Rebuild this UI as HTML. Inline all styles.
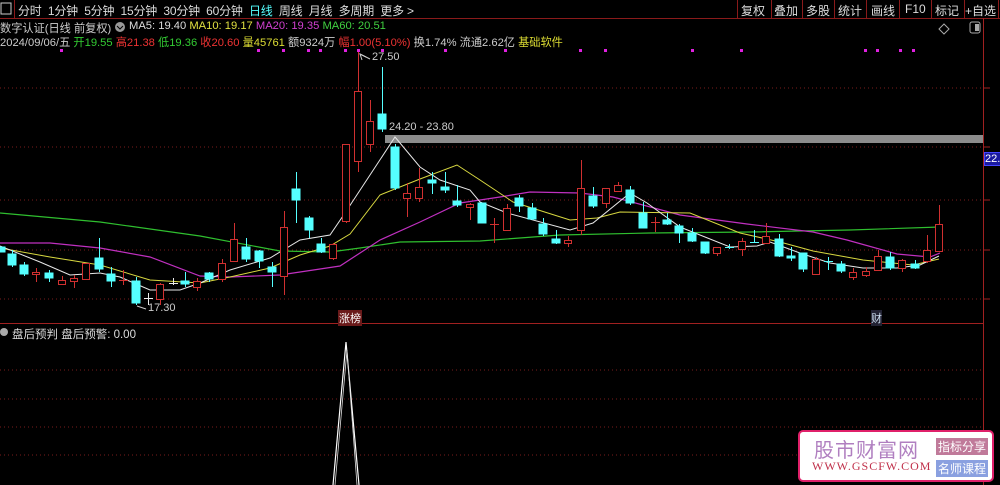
<!DOCTYPE html>
<html><head><meta charset="utf-8"><style>
body{margin:0;background:#000;width:1000px;height:485px;overflow:hidden;font-family:"Liberation Sans","Noto Sans CJK SC",sans-serif;}
.t{position:absolute;white-space:nowrap;font-size:12px;}
</style></head><body>
<div style="position:relative;width:1000px;height:485px;">
<svg width="1000" height="485" style="position:absolute;left:0;top:0">
<line x1="0" y1="18.5" x2="1000" y2="18.5" stroke="#8a1a1a"/>
<rect x="1" y="3" width="10" height="11" fill="none" stroke="#ccc"/>
<line x1="14.5" y1="0" x2="14.5" y2="18" stroke="#8a1a1a"/>
<g stroke="#8a1a1a"><line x1="737.5" y1="0" x2="737.5" y2="18"/><line x1="771.5" y1="0" x2="771.5" y2="18"/><line x1="802.5" y1="0" x2="802.5" y2="18"/><line x1="834.5" y1="0" x2="834.5" y2="18"/><line x1="866.5" y1="0" x2="866.5" y2="18"/><line x1="899.5" y1="0" x2="899.5" y2="18"/><line x1="931.5" y1="0" x2="931.5" y2="18"/><line x1="964.5" y1="0" x2="964.5" y2="18"/><line x1="998.5" y1="0" x2="998.5" y2="18"/></g>
<line x1="983.5" y1="18" x2="983.5" y2="485" stroke="#a02020"/>
<line x1="0" y1="323.5" x2="983" y2="323.5" stroke="#a02020"/>
<g stroke="#7a1c1c" stroke-dasharray="1,3">
<line x1="0" y1="88" x2="983" y2="88"/><line x1="0" y1="147" x2="983" y2="147"/><line x1="0" y1="200" x2="983" y2="200"/><line x1="0" y1="250" x2="983" y2="250"/><line x1="0" y1="299" x2="983" y2="299"/>
<line x1="0" y1="370" x2="983" y2="370"/><line x1="0" y1="399" x2="983" y2="399"/><line x1="0" y1="427" x2="983" y2="427"/><line x1="0" y1="455" x2="983" y2="455"/>
</g>
<g stroke="#a02020"><line x1="984" y1="88" x2="990" y2="88"/><line x1="984" y1="147" x2="990" y2="147"/><line x1="984" y1="200" x2="990" y2="200"/><line x1="984" y1="250" x2="990" y2="250"/><line x1="984" y1="299" x2="990" y2="299"/></g>
<g fill="#e020e0"><rect x="60" y="49" width="3" height="3"/><rect x="257" y="49" width="3" height="3"/><rect x="282" y="49" width="3" height="3"/><rect x="307" y="49" width="3" height="3"/><rect x="319" y="49" width="3" height="3"/><rect x="344" y="49" width="3" height="3"/><rect x="357" y="49" width="3" height="3"/><rect x="381" y="49" width="3" height="3"/><rect x="444" y="49" width="3" height="3"/><rect x="504" y="49" width="3" height="3"/><rect x="579" y="49" width="3" height="3"/><rect x="604" y="49" width="3" height="3"/><rect x="691" y="49" width="3" height="3"/><rect x="740" y="49" width="3" height="3"/><rect x="864" y="49" width="3" height="3"/><rect x="876" y="49" width="3" height="3"/><rect x="899" y="49" width="3" height="3"/><rect x="912" y="49" width="3" height="3"/></g>
<rect x="385" y="135" width="598" height="8" fill="#8c8c8c"/>
<polyline fill="none" stroke="#2fbf2f" stroke-width="1.2" points="0,213 100,222 200,236 280,251 330,252 360,248 400,242 480,241 560,235 650,233 750,232 850,230 940,227"/>
<polyline fill="none" stroke="#c030c0" stroke-width="1.2" points="0,243 50,243 100,248 150,257 200,276 230,277 280,275 340,266 380,240 420,222 460,203 480,200 500,197 530,192 580,193 613,197 680,215 747,224 813,232 847,240 897,254 930,257 940,253"/>
<polyline fill="none" stroke="#d8d840" stroke-width="1" points="0,248 50,257 100,265 150,280 200,283 230,277 270,268 300,255 330,246 350,234 380,195 420,179 457,165 480,180 513,202 570,220 597,218 620,212 690,213 740,233 780,242 813,251 863,260 913,265 939,259"/>
<polyline fill="none" stroke="#e8e8e8" stroke-width="1" points="0,246 40,262 70,275 100,273 120,277 150,290 180,290 200,283 230,270 270,258 300,240 330,235 345,213 370,175 395,137 420,167 440,180 470,190 480,202 507,213 570,230 593,223 630,193 647,203 680,227 730,247 757,246 770,242 800,253 830,263 863,268 897,268 920,265 939,256"/>
<g stroke="#5ff" fill="#5ff">
<rect x="-3" y="247" width="8" height="5"/>
<line x1="12.5" y1="250" x2="12.5" y2="267"/><rect x="8" y="254" width="8" height="11"/>
<line x1="24.5" y1="262" x2="24.5" y2="276"/><rect x="20" y="265" width="8" height="9"/>
<line x1="49.5" y1="270" x2="49.5" y2="282"/><rect x="45" y="273" width="8" height="5"/>
<line x1="99.5" y1="238" x2="99.5" y2="272"/><rect x="95" y="258" width="8" height="11"/>
<line x1="111.5" y1="267" x2="111.5" y2="287"/><rect x="107" y="274" width="8" height="7"/>
<line x1="136.5" y1="277" x2="136.5" y2="305"/><rect x="132" y="281" width="8" height="22"/>
<line x1="185.5" y1="272" x2="185.5" y2="287"/><rect x="181" y="281" width="8" height="3"/>
<line x1="209.5" y1="272" x2="209.5" y2="282"/><rect x="205" y="273" width="8" height="6"/>
<line x1="246.5" y1="238" x2="246.5" y2="262"/><rect x="242" y="247" width="8" height="12"/>
<line x1="259.5" y1="250" x2="259.5" y2="268"/><rect x="255" y="251" width="8" height="10"/>
<line x1="272.5" y1="262" x2="272.5" y2="287"/><rect x="268" y="267" width="8" height="5"/>
<line x1="296.5" y1="172" x2="296.5" y2="223"/><rect x="292" y="189" width="8" height="11"/>
<line x1="309.5" y1="216" x2="309.5" y2="238"/><rect x="305" y="218" width="8" height="12"/>
<line x1="321.5" y1="238" x2="321.5" y2="253"/><rect x="317" y="244" width="8" height="8"/>
<line x1="382.5" y1="67" x2="382.5" y2="132"/><rect x="378" y="114" width="8" height="15"/>
<line x1="395.5" y1="144" x2="395.5" y2="190"/><rect x="391" y="147" width="8" height="41"/>
<line x1="432.5" y1="172" x2="432.5" y2="194"/><rect x="428" y="180" width="8" height="3"/>
<line x1="445.5" y1="172" x2="445.5" y2="193"/><rect x="441" y="187" width="8" height="3"/>
<line x1="457.5" y1="185" x2="457.5" y2="207"/><rect x="453" y="201" width="8" height="4"/>
<rect x="478" y="203" width="8" height="20"/>
<line x1="519.5" y1="195" x2="519.5" y2="212"/><rect x="515" y="198" width="8" height="8"/>
<line x1="532.5" y1="203" x2="532.5" y2="220"/><rect x="528" y="208" width="8" height="11"/>
<line x1="543.5" y1="218" x2="543.5" y2="236"/><rect x="539" y="224" width="8" height="10"/>
<line x1="556.5" y1="230" x2="556.5" y2="244"/><rect x="552" y="239" width="8" height="4"/>
<line x1="593.5" y1="187" x2="593.5" y2="208"/><rect x="589" y="196" width="8" height="10"/>
<line x1="630.5" y1="186" x2="630.5" y2="205"/><rect x="626" y="190" width="8" height="13"/>
<line x1="643.5" y1="202" x2="643.5" y2="228"/><rect x="639" y="213" width="8" height="15"/>
<line x1="667.5" y1="213" x2="667.5" y2="225"/><rect x="663" y="220" width="8" height="4"/>
<line x1="679.5" y1="224" x2="679.5" y2="243"/><rect x="675" y="226" width="8" height="7"/>
<line x1="692.5" y1="228" x2="692.5" y2="242"/><rect x="688" y="233" width="8" height="8"/>
<line x1="705.5" y1="242" x2="705.5" y2="254"/><rect x="701" y="242" width="8" height="11"/>
<line x1="729.5" y1="244" x2="729.5" y2="249"/><line x1="725" y1="247.5" x2="734" y2="247.5"/>
<line x1="754.5" y1="230" x2="754.5" y2="243"/><line x1="750" y1="242.5" x2="759" y2="242.5"/>
<line x1="779.5" y1="234" x2="779.5" y2="257"/><rect x="775" y="239" width="8" height="17"/>
<line x1="791.5" y1="247" x2="791.5" y2="261"/><rect x="787" y="256" width="8" height="2"/>
<line x1="803.5" y1="253" x2="803.5" y2="272"/><rect x="799" y="253" width="8" height="16"/>
<line x1="828.5" y1="257" x2="828.5" y2="270"/><line x1="824" y1="261.5" x2="833" y2="261.5"/>
<line x1="841.5" y1="261" x2="841.5" y2="273"/><rect x="837" y="264" width="8" height="7"/>
<line x1="890.5" y1="252" x2="890.5" y2="270"/><rect x="886" y="257" width="8" height="11"/>
<line x1="915.5" y1="260" x2="915.5" y2="269"/><rect x="911" y="264" width="8" height="4"/>
</g>
<g stroke="#d03030" fill="#000">
<line x1="36.5" y1="268" x2="36.5" y2="282"/><rect x="32.5" y="272.5" width="7" height="2"/>
<line x1="62.5" y1="276" x2="62.5" y2="284"/><rect x="58.5" y="280.5" width="7" height="4"/>
<line x1="74.5" y1="275" x2="74.5" y2="288"/><rect x="70.5" y="278.5" width="7" height="3"/>
<rect x="82.5" y="263.5" width="7" height="16"/>
<line x1="123.5" y1="270" x2="123.5" y2="285"/><line x1="119" y1="280.5" x2="128" y2="280.5"/>
<line x1="160.5" y1="283" x2="160.5" y2="305"/><rect x="156.5" y="284.5" width="7" height="15"/>
<line x1="197.5" y1="278" x2="197.5" y2="291"/><rect x="193.5" y="281.5" width="7" height="6"/>
<line x1="222.5" y1="259" x2="222.5" y2="282"/><rect x="218.5" y="263.5" width="7" height="16"/>
<line x1="234.5" y1="223" x2="234.5" y2="262"/><rect x="230.5" y="239.5" width="7" height="22"/>
<line x1="284.5" y1="211" x2="284.5" y2="295"/><rect x="280.5" y="227.5" width="7" height="49"/>
<line x1="333.5" y1="243" x2="333.5" y2="260"/><rect x="329.5" y="244.5" width="7" height="14"/>
<line x1="346.5" y1="144" x2="346.5" y2="223"/><rect x="342.5" y="144.5" width="7" height="77"/>
<line x1="358.5" y1="52" x2="358.5" y2="172"/><rect x="354.5" y="91.5" width="7" height="70"/>
<line x1="370.5" y1="100" x2="370.5" y2="152"/><rect x="366.5" y="121.5" width="7" height="23"/>
<line x1="407.5" y1="183" x2="407.5" y2="217"/><rect x="403.5" y="193.5" width="7" height="5"/>
<line x1="419.5" y1="168" x2="419.5" y2="202"/><rect x="415.5" y="187.5" width="7" height="11"/>
<line x1="470.5" y1="203" x2="470.5" y2="220"/><rect x="466.5" y="204.5" width="7" height="3"/>
<line x1="494.5" y1="218" x2="494.5" y2="243"/><line x1="490" y1="224.5" x2="499" y2="224.5"/>
<line x1="507.5" y1="204" x2="507.5" y2="230"/><rect x="503.5" y="208.5" width="7" height="22"/>
<line x1="568.5" y1="236" x2="568.5" y2="247"/><rect x="564.5" y="240.5" width="7" height="3"/>
<line x1="581.5" y1="160" x2="581.5" y2="235"/><rect x="577.5" y="188.5" width="7" height="42"/>
<line x1="606.5" y1="188" x2="606.5" y2="208"/><rect x="602.5" y="188.5" width="7" height="15"/>
<line x1="618.5" y1="182" x2="618.5" y2="192"/><rect x="614.5" y="185.5" width="7" height="6"/>
<line x1="655.5" y1="217" x2="655.5" y2="232"/><line x1="651" y1="222.5" x2="660" y2="222.5"/>
<line x1="717.5" y1="247" x2="717.5" y2="256"/><rect x="713.5" y="247.5" width="7" height="6"/>
<line x1="742.5" y1="238" x2="742.5" y2="256"/><rect x="738.5" y="241.5" width="7" height="8"/>
<line x1="766.5" y1="223" x2="766.5" y2="244"/><rect x="762.5" y="236.5" width="7" height="7"/>
<line x1="816.5" y1="257" x2="816.5" y2="274"/><rect x="812.5" y="259.5" width="7" height="15"/>
<line x1="853.5" y1="268" x2="853.5" y2="280"/><rect x="849.5" y="272.5" width="7" height="5"/>
<line x1="866.5" y1="267" x2="866.5" y2="277"/><rect x="862.5" y="271.5" width="7" height="4"/>
<line x1="878.5" y1="250" x2="878.5" y2="271"/><rect x="874.5" y="256.5" width="7" height="14"/>
<line x1="902.5" y1="259" x2="902.5" y2="272"/><rect x="898.5" y="260.5" width="7" height="8"/>
<line x1="927.5" y1="235" x2="927.5" y2="263"/><rect x="923.5" y="250.5" width="7" height="11"/>
<line x1="939.5" y1="205" x2="939.5" y2="252"/><rect x="935.5" y="224.5" width="7" height="27"/>
</g>
<g stroke="#eee"><line x1="148.5" y1="293" x2="148.5" y2="305"/><line x1="144" y1="298.5" x2="153" y2="298.5"/><line x1="173.5" y1="278" x2="173.5" y2="285"/><line x1="169" y1="283.5" x2="178" y2="283.5"/></g>
<polyline points="366,57 360,54 362,60" fill="none" stroke="#ccc"/>
<line x1="360" y1="54" x2="370" y2="59" stroke="#ccc"/>
<line x1="137" y1="306" x2="146" y2="309" stroke="#ccc"/>
<polyline points="333,485 346,342 359,485" fill="none" stroke="#fff" stroke-width="1.2"/>
<polyline points="335,485 347,350 357,485" fill="none" stroke="#ddd" stroke-width="0.8"/>
<path d="M944,24 l5,5 -5,5 -5,-5z" fill="none" stroke="#aaa"/>
<rect x="970" y="22" width="10" height="11" rx="2" fill="none" stroke="#aaa"/><rect x="975" y="24" width="4" height="7" fill="#aaa"/>
<circle cx="4" cy="332" r="4" fill="#aaa"/>
<circle cx="120" cy="27" r="5" fill="#999"/><path d="M117,26 l3,3 3,-3" stroke="#000" fill="none"/>
</svg>
<div class="t" style="left:18px;top:2px;color:#ddd;font-size:12px;letter-spacing:-0.2px;">分时&nbsp;&nbsp;1分钟&nbsp;&nbsp;5分钟&nbsp;&nbsp;15分钟&nbsp;&nbsp;30分钟&nbsp;&nbsp;60分钟&nbsp;&nbsp;<span style="color:#5ff">日线</span>&nbsp;&nbsp;周线&nbsp;&nbsp;月线&nbsp;&nbsp;多周期&nbsp;&nbsp;更多 &gt;</div>
<div class="t" style="left:741px;top:2px;color:#ddd;">复权</div>
<div class="t" style="left:774px;top:2px;color:#ddd;">叠加</div>
<div class="t" style="left:806px;top:2px;color:#ddd;">多股</div>
<div class="t" style="left:838px;top:2px;color:#ddd;">统计</div>
<div class="t" style="left:871px;top:2px;color:#ddd;">画线</div>
<div class="t" style="left:905px;top:2px;color:#ddd;">F10</div>
<div class="t" style="left:935px;top:2px;color:#ddd;">标记</div>
<div class="t" style="left:965px;top:2px;color:#ddd;">+自选</div>
<div class="t" style="left:0px;top:20px;color:#ccc;font-size:11.2px;">数字认证(日线 前复权)</div>
<div class="t" style="left:129px;top:20px;color:#ddd;font-size:11.2px;">MA5: 19.40 <span style="color:#e0e040">MA10: 19.17</span> <span style="color:#d040d0">MA20: 19.35</span> <span style="color:#40d040">MA60: 20.51</span></div>
<div class="t" style="left:0px;top:34px;color:#ccc;font-size:11.2px;">2024/09/06/五 <span style="color:#3c3">开19.55</span> <span style="color:#e33">高21.38</span> <span style="color:#3c3">低19.36</span> <span style="color:#e33">收20.60</span> <span style="color:#dd3">量45761</span> 额9324万 <span style="color:#e33">幅1.00(5.10%)</span> 换1.74% 流通2.62亿 <span style="color:#dd3">基础软件</span></div>
<div class="t" style="left:372px;top:51px;color:#ccc;font-size:11px;">27.50</div>
<div class="t" style="left:389px;top:121px;color:#ccc;font-size:11px;">24.20 - 23.80</div>
<div class="t" style="left:148px;top:302px;color:#ccc;font-size:11px;">17.30</div>
<div class="t" style="left:338px;top:310px;color:#fff;background:#6a1a1a;font-size:11px;padding:0 1px;">涨榜</div>
<div class="t" style="left:871px;top:310px;color:#cde;background:#223;font-size:11px;">财</div>
<div class="t" style="left:984px;top:152px;color:#fff;background:#1a1aa0;font-size:11px;width:16px;border:1px solid #44f;overflow:hidden;">22.</div>
<div class="t" style="left:12px;top:326px;color:#ddd;font-size:11.5px;">盘后预判 盘后预警: 0.00</div>
<div style="position:absolute;left:798px;top:430px;width:196px;height:52px;background:#fff;border:2px solid #e0206a;border-radius:5px;box-sizing:border-box;">
<div class="t" style="left:14px;top:2px;font-size:20px;color:#b07fc0;letter-spacing:1px;">股市财富网</div>
<div class="t" style="left:12px;top:27px;font-size:12px;color:#c0304a;font-family:'Liberation Serif',serif;letter-spacing:1px;">WWW.GSCFW.COM</div>
<div class="t" style="left:136px;top:6px;font-size:12px;color:#fff;background:#c07a9a;padding:0 2px;">指标分享</div>
<div class="t" style="left:136px;top:28px;font-size:12px;color:#fff;background:#8aa0e0;padding:0 2px;">名师课程</div>
</div>
</div>
</body></html>
